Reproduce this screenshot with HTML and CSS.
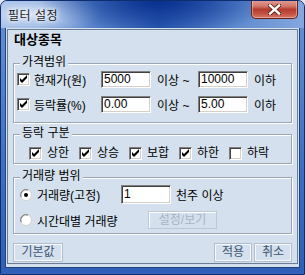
FILE: index.html
```html
<!DOCTYPE html>
<html>
<head>
    <meta charset="UTF-8">
    <title>필터 설정</title>
    <link rel="stylesheet" href="styles.css">
</head>
<body>
    <div class="window">
        <div class="titlebar">
            <span class="title">필터 설정</span>
            <span class="close-btn">
                <svg width="13" height="11" viewBox="0 0 13 11">
                    <path d="M2 1.5 L11 9.5 M11 1.5 L2 9.5" stroke="#5b1d14" stroke-width="4.2" stroke-linecap="square"/>
                    <path d="M2 1.5 L11 9.5 M11 1.5 L2 9.5" stroke="#ffffff" stroke-width="2.4" stroke-linecap="square"/>
                </svg>
            </span>
        </div>
        <div class="client">
            <div class="panel">
                <div class="panel-title">대상종목</div>

                <fieldset class="group">
                    <legend>가격범위</legend>
                    <div class="range-rows">
                        <div class="range-row">
                            <span class="check-label"><span class="checkbox checked"></span>현재가(원)</span>
                            <span class="field">5000</span>
                            <span class="connector">이상 ~</span>
                            <span class="field">10000</span>
                            <span class="unit">이하</span>
                        </div>
                        <div class="range-row">
                            <span class="check-label"><span class="checkbox checked"></span>등락률(%)</span>
                            <span class="field">0.00</span>
                            <span class="connector">이상 ~</span>
                            <span class="field">5.00</span>
                            <span class="unit">이하</span>
                        </div>
                    </div>
                </fieldset>

                <fieldset class="group">
                    <legend>등락 구분</legend>
                    <div class="check-row">
                        <span class="check-item"><span class="checkbox checked"></span>상한</span>
                        <span class="check-item"><span class="checkbox checked"></span>상승</span>
                        <span class="check-item"><span class="checkbox checked"></span>보합</span>
                        <span class="check-item"><span class="checkbox checked"></span>하한</span>
                        <span class="check-item"><span class="checkbox"></span>하락</span>
                    </div>
                </fieldset>

                <fieldset class="group">
                    <legend>거래량 범위</legend>
                    <div class="volume-rows">
                        <div class="volume-row tall">
                            <span class="radio-label"><span class="radio selected"></span>거래량(고정)</span>
                            <span class="field tall-field">1</span>
                            <span class="unit-left">천주 이상</span>
                        </div>
                        <div class="volume-row">
                            <span class="radio-label"><span class="radio"></span>시간대별 거래량</span>
                            <span class="sub-btn">설정/보기</span>
                        </div>
                    </div>
                </fieldset>

                <div class="actions">
                    <span class="btn btn-wide">기본값</span>
                    <span class="btn push-right">적용</span>
                    <span class="btn">취소</span>
                </div>
            </div>
        </div>
    </div>
</body>
</html>
```

FILE: styles.css
```css
* {
    box-sizing: border-box;
}

body {
    margin: 0;
    background: #dfe6ee;
    font-family: "Liberation Sans", "Noto Sans CJK KR", sans-serif;
    font-size: 12px;
    color: #000;
}

.window {
    width: 305px;
    height: 275px;
    display: flex;
    flex-direction: column;
    background: linear-gradient(to bottom, #6b93d4, #3f6fc4 60%, #2f5fb6);
    border: 1px solid #0f2c6c;
    border-radius: 7px 7px 0 0;
    padding: 0 5px 6px;
    overflow: hidden;
}

.titlebar {
    height: 27px;
    margin: 0 -5px;
    padding: 0 6px 0 7px;
    display: flex;
    align-items: center;
    background:
        radial-gradient(ellipse 120px 34px at 52% 0, #08308f, rgba(8, 48, 143, 0)),
        radial-gradient(ellipse 70px 22px at 30px 13px, rgba(220, 232, 250, 0.9), rgba(220, 232, 250, 0)),
        linear-gradient(to right, #98b5e2, #5f8ace 30%, #2d5bb3 52%, #5b87cd 75%, #84a8de);
}

.title {
    font-size: 12px;
    color: #1c1c1c;
    text-shadow: 0 0 4px #fff, 0 0 6px #fff;
    letter-spacing: 0.5px;
}

.close-btn {
    margin-left: auto;
    align-self: flex-start;
    width: 47px;
    height: 19px;
    margin-top: -1px;
    display: flex;
    align-items: center;
    justify-content: center;
    border: 1px solid #6a2118;
    border-top: none;
    border-radius: 0 0 5px 5px;
    background: linear-gradient(to bottom, #e3a096, #d0766a 35%, #b53b2c 52%, #c4513f 75%, #d4776a);
    box-shadow: inset 0 0 0 1px rgba(255, 220, 210, 0.45);
}

.client {
    flex: 1;
    background: #d4e0ed;
    border-left: 1px solid #23437c;
    border-right: 1px solid #23437c;
    border-bottom: 1px solid #23437c;
    margin: 0 -1px;
    padding: 1px 1px 0;
}

.panel {
    border: 1px solid #6b7e95;
    padding-bottom: 1px;
}

.panel-title {
    font-weight: bold;
    font-size: 13px;
    line-height: 20px;
    padding-left: 6px;
}

.group {
    margin: 6px 5px 0;
    padding: 0;
    min-width: 0;
    border: 1px solid #9aa6b3;
    box-shadow: inset 1px 1px 0 #fff, 1px 1px 0 #fff;
}

.group + .group {
    margin-top: 4px;
}

.group:last-of-type {
    margin-top: 6px;
}

.group legend {
    margin-left: 6px;
    padding: 0 2px 3px;
    line-height: 12px;
    background: #d4e0ed;
}

.range-rows {
    display: flex;
    flex-direction: column;
    gap: 8px;
    padding: 0 0 9px 3px;
}

.range-row {
    display: flex;
    align-items: center;
    height: 17px;
}

.check-label {
    display: flex;
    align-items: center;
    gap: 4px;
    width: 84px;
}

.checkbox {
    width: 13px;
    height: 13px;
    flex-shrink: 0;
    background: #fff;
    border: 1px solid;
    border-color: #808080 #fff #fff #808080;
    box-shadow: inset 1px 1px 0 #404040, inset -1px -1px 0 #d4d0c8;
}

.checkbox.checked {
    background: #fff url("data:image/svg+xml,%3Csvg xmlns='http://www.w3.org/2000/svg' width='11' height='11'%3E%3Cpath d='M2 4 L2 7 L4 9 L9 4 L9 1 L4 6 Z' fill='%23000'/%3E%3C/svg%3E") no-repeat 0 0;
}

.field {
    width: 50px;
    height: 17px;
    background: #fff;
    border: 1px solid;
    border-color: #808080 #fff #fff #808080;
    box-shadow: inset 1px 1px 0 #404040, inset -1px -1px 0 #d4d0c8;
    padding: 0 2px;
    line-height: 15px;
}

.connector {
    width: 41px;
    margin-left: 6px;
}

.unit {
    margin-left: 6px;
}

.check-row {
    display: flex;
    padding: 4px 0 3px 15px;
    line-height: 14px;
}

.check-item {
    display: flex;
    align-items: center;
    gap: 5px;
    width: 50px;
}

.volume-rows {
    display: flex;
    flex-direction: column;
    gap: 7px;
    padding: 0 0 4px 6px;
}

.volume-row {
    display: flex;
    align-items: center;
    height: 18px;
}

.volume-row.tall {
    height: 19px;
}

.radio-label {
    display: flex;
    align-items: center;
    gap: 5px;
    width: 101px;
}

.radio {
    width: 12px;
    height: 12px;
    flex-shrink: 0;
    background: url("data:image/svg+xml,%3Csvg xmlns='http://www.w3.org/2000/svg' width='12' height='12'%3E%3Ccircle cx='6' cy='6' r='5.5' fill='%23fff' stroke='%23d4d0c8'/%3E%3Cpath d='M1.2 8 A5.2 5.2 0 0 1 8 1.2' fill='none' stroke='%23808080' stroke-width='1.2'/%3E%3C/svg%3E") no-repeat;
}

.radio.selected {
    background: url("data:image/svg+xml,%3Csvg xmlns='http://www.w3.org/2000/svg' width='12' height='12'%3E%3Ccircle cx='6' cy='6' r='5.5' fill='%23fff' stroke='%23d4d0c8'/%3E%3Cpath d='M1.2 8 A5.2 5.2 0 0 1 8 1.2' fill='none' stroke='%23808080' stroke-width='1.2'/%3E%3Ccircle cx='6' cy='6' r='2' fill='%23000'/%3E%3C/svg%3E") no-repeat;
}

.tall-field {
    height: 19px;
    line-height: 17px;
}

.unit-left {
    margin-left: 5px;
}

.sub-btn {
    margin-left: 27px;
    width: 69px;
    height: 18px;
    border: 1px solid #bcc8d4;
    box-shadow: inset 1px 1px 0 #fff;
    color: #a6b4c3;
    text-align: center;
    line-height: 16px;
}

.actions {
    display: flex;
    gap: 2px;
    margin: 9px 5px 0;
}

.btn {
    width: 38px;
    height: 19px;
    border: 1px solid #b1bdca;
    box-shadow: inset 0 0 0 1px #f4f8fc;
    color: #3e5671;
    text-align: center;
    line-height: 17px;
}

.btn-wide {
    width: 50px;
}

.push-right {
    margin-left: auto;
}
```
